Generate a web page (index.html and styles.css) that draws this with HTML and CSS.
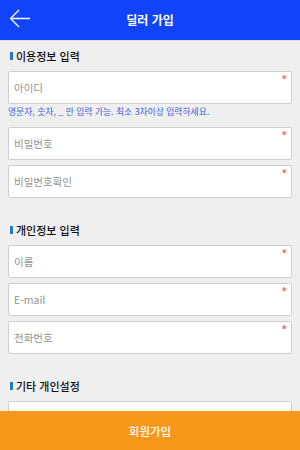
FILE: index.html
```html
<!DOCTYPE html>
<html lang="ko">

<head>
    <meta charset="utf-8">
    <meta name="viewport" content="width=device-width, initial-scale=1.0">
    <title>딜러 가입</title>
    <link rel="stylesheet" href="styles.css">
</head>

<body>
    <header class="top">
        <button class="back">
            <svg width="24" height="22" viewBox="0 0 24 22">
                <path d="M3 10.5 H22 M11 2 L2.5 10.5 L11 19" fill="none" stroke="#fff" stroke-width="1.3" />
            </svg>
        </button>
        <h1>딜러 가입</h1>
    </header>

    <section class="group">
        <h2>이용정보 입력</h2>
        <div class="field"><input type="text" placeholder="아이디"><span class="req">*</span></div>
        <p class="hint">영문자, 숫자, _ 만 입력 가능. 최소 3자이상 입력하세요.</p>
        <div class="field"><input type="password" placeholder="비밀번호"><span class="req">*</span></div>
        <div class="field"><input type="password" placeholder="비밀번호확인"><span class="req">*</span></div>
    </section>

    <section class="group">
        <h2>개인정보 입력</h2>
        <div class="field"><input type="text" placeholder="이름"><span class="req">*</span></div>
        <div class="field"><input type="text" placeholder="E-mail"><span class="req">*</span></div>
        <div class="field"><input type="text" placeholder="전화번호"><span class="req">*</span></div>
    </section>

    <section class="group">
        <h2>기타 개인설정</h2>
        <div class="field"><input type="text" placeholder="주소입력 (선택)"></div>
        <div class="field"><input type="text" placeholder="상세주소"></div>
    </section>

    <button class="join">회원가입</button>
</body>

</html>
```

FILE: styles.css
```css
body {
    margin: 0;
    background-color: #efefef;
    font-family: "Noto Sans CJK KR", "Noto Sans", sans-serif;
    padding-bottom: 50px;
}

.top {
    height: 40px;
    background-color: #1143fb;
    border-bottom: 1px solid #dfe3f0;
    display: flex;
    align-items: center;
    justify-content: center;
    position: relative;
}

.top h1 {
    margin: 0;
    color: #fff;
    font-size: 12px;
    font-weight: bold;
    line-height: 40px;
}

.back {
    position: absolute;
    left: 8px;
    top: 8px;
    padding: 0;
    border: 0;
    background: none;
    height: 22px;
}

.group {
    padding: 0 8px;
    margin-top: 7px;
}

.group + .group {
    margin-top: 24px;
}

.group h2 {
    margin: 0 0 7px;
    height: 16px;
    line-height: 16px;
    font-size: 11px;
    font-weight: 500;
    color: #111;
    display: flex;
    align-items: center;
    gap: 3px;
    padding-left: 2px;
}

.group h2::before {
    content: "";
    width: 3px;
    height: 8px;
    background-color: #1c7fc4;
}

.field {
    position: relative;
    margin-bottom: 5px;
}

.field input {
    display: block;
    box-sizing: border-box;
    width: 100%;
    height: 33px;
    margin: 0;
    padding: 0 5px;
    border: 1px solid #cfcfcf;
    border-radius: 2px;
    background-color: #fff;
    font-family: inherit;
    font-size: 10.5px;
}

.field input::placeholder {
    color: #939393;
}

.req {
    position: absolute;
    right: 5px;
    top: 3px;
    color: #f36a6a;
    font-size: 11px;
    font-weight: bold;
    line-height: 11px;
}

.hint {
    margin: -5px 0 7px;
    height: 16px;
    line-height: 16px;
    font-size: 8.8px;
    color: #3d5fd9;
    white-space: nowrap;
}

.join {
    position: fixed;
    left: 0;
    bottom: 0;
    width: 100%;
    height: 39px;
    border: 0;
    background-color: #f8981a;
    color: #fff;
    font-family: inherit;
    font-size: 11.5px;
    font-weight: 500;
}
```
